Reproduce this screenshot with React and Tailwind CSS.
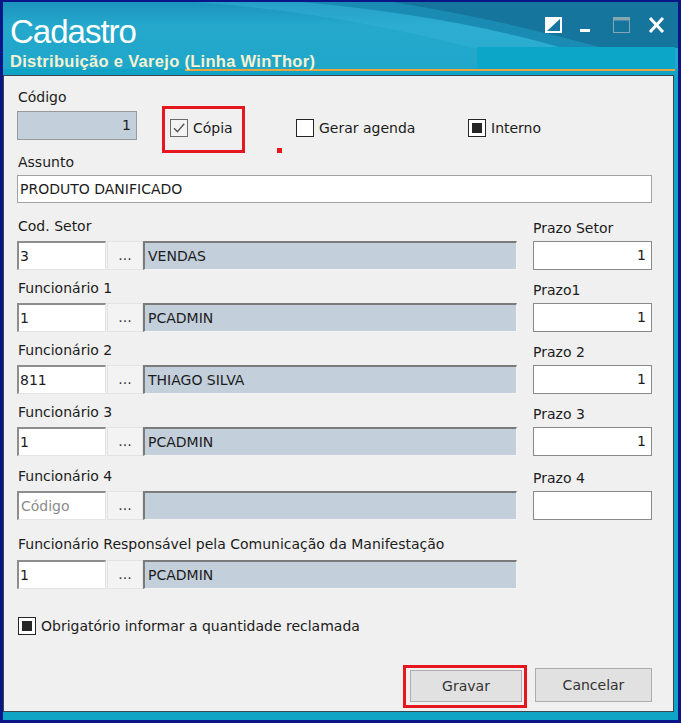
import React from "react";

const rows = [
  { label: "Cod. Setor", code: "3", desc: "VENDAS", prazoLabel: "Prazo Setor", prazo: "1" },
  { label: "Funcionário 1", code: "1", desc: "PCADMIN", prazoLabel: "Prazo1", prazo: "1" },
  { label: "Funcionário 2", code: "811", desc: "THIAGO SILVA", prazoLabel: "Prazo 2", prazo: "1" },
  { label: "Funcionário 3", code: "1", desc: "PCADMIN", prazoLabel: "Prazo 3", prazo: "1" },
  { label: "Funcionário 4", code: "", desc: "", prazoLabel: "Prazo 4", prazo: "" },
];

function Box({ state }) {
  if (state === "check") {
    return (
      <span className="flex w-[18px] h-[18px] items-center justify-center border border-[#6b6b6b] bg-[#f4f4f4]">
        <svg width="14" height="14" viewBox="0 0 14 14">
          <path d="M2 7.2 L5.4 10.6 L12.2 2.8" fill="none" stroke="#5a5a5a" strokeWidth="1.4" />
        </svg>
      </span>
    );
  }
  return (
    <span className="flex w-[18px] h-[18px] items-center justify-center border border-[#262626] bg-white">
      {state === "fill" && <span className="w-[10px] h-[10px] bg-[#262626]" />}
    </span>
  );
}

function Check({ state, children }) {
  return (
    <div className="flex items-center gap-[5px] leading-4">
      <Box state={state} />
      <span>{children}</span>
    </div>
  );
}

function Lookup({ code, desc }) {
  return (
    <div className="flex h-[29px]">
      <div className="w-[89px] flex items-center pl-[1px] bg-white border-t-2 border-l-2 border-r border-b border-t-[#8d8d8d] border-l-[#8d8d8d] border-r-[#e4e4e4] border-b-[#e4e4e4]">
        {code ? <span>{code}</span> : <span className="pl-[1px] text-[#8c8c8c]">Código</span>}
      </div>
      <div className="ml-[1px] w-[36px] flex items-center justify-center bg-[#f3f3f3] border border-[#e3e3e3] text-[#3a3a3a]">
        ...
      </div>
      <div className="flex-1 flex items-center pl-[3px] bg-[#c3cfdb] border-t-2 border-l-2 border-r border-b border-t-[#7b7b7b] border-l-[#7b7b7b] border-r-[#f4f4f4] border-b-[#f4f4f4]">
        {desc}
      </div>
    </div>
  );
}

function TitleArt() {
  return (
    <svg className="absolute inset-0" width="675" height="67" viewBox="0 0 675 67">
      <defs>
        <linearGradient id="tb" x1="0" y1="0" x2="0" y2="1">
          <stop offset="0" stopColor="#1c93bd" />
          <stop offset="0.35" stopColor="#25a8cc" />
          <stop offset="1" stopColor="#1fa7ca" />
        </linearGradient>
      </defs>
      <rect width="675" height="67" fill="url(#tb)" />
      <path d="M190 0 Q330 10 470 46 L560 46 Q450 14 300 0 Z" fill="#3cb7da" opacity="0.35" />
      <path d="M300 0 Q450 14 560 46 L675 46 L675 0 Z" fill="#1a8cb3" />
      <path d="M390 0 Q500 18 600 46 L675 46 L675 0 Z" fill="#15759c" />
      <rect x="474" y="45" width="198" height="22" fill="#0ca6c8" />
    </svg>
  );
}

function WindowButtons() {
  return (
    <div className="flex items-start pt-[15px] pr-[13px]">
      <svg width="17" height="16" viewBox="0 0 17 16">
        <rect x="1" y="1" width="15" height="14" fill="none" stroke="#fff" strokeWidth="2" />
        <polygon points="1,1 16,1 1,15" fill="#fff" />
      </svg>
      <span className="ml-[18px] mt-[12px] w-[10px] h-[3px] bg-white" />
      <svg className="ml-[23px]" width="17" height="16" viewBox="0 0 17 16">
        <rect x="0.5" y="0.5" width="16" height="15" fill="none" stroke="#86a6b2" strokeWidth="1" />
        <rect x="0.5" y="0.5" width="16" height="3" fill="#86a6b2" />
      </svg>
      <svg className="ml-[18px]" width="17" height="16" viewBox="0 0 17 16">
        <path d="M2 1 L15 15 M15 1 L2 15" stroke="#fff" strokeWidth="3" />
      </svg>
    </div>
  );
}

export default function App() {
  return (
    <div className="w-[681px] h-[723px] bg-[#0a1588] pt-[2px] px-[3px] pb-[3px]">
      <div className="h-full flex flex-col bg-[#0fa4c5]">
        {/* title bar */}
        <div className="relative h-[67px] flex justify-between">
          <TitleArt />
          <div className="relative pl-[7px] pt-[12px] font-['Liberation_Sans',Arial,sans-serif]">
            <div className="text-[33px] leading-[36px] tracking-[-1px] text-white">Cadastro</div>
            <div className="mt-[1px] text-[16.5px] leading-[20px] tracking-[0.3px] font-bold text-[#f4f2d2]">
              Distribuição e Varejo (Linha WinThor)
            </div>
          </div>
          <div className="relative">
            <WindowButtons />
          </div>
        </div>
        <div className="h-[2px] ml-[182px] mr-[3px] bg-[#e9a43c]" />
        <div className="h-[4px]" />

        {/* form body */}
        <div className="flex-1 mr-[4px] mb-[8px] bg-[#f0f0f0] border border-[#3d464c] pl-[13px] pr-[21px] pt-[13px] text-[14px] text-[#1c1c1c] font-['DejaVu_Sans',sans-serif]">
          <div className="flex items-start">
            <div>
              <div className="pl-[1px] leading-4">Código</div>
              <div className="mt-[6px] w-[120px] h-[29px] flex items-center justify-end pr-[5px] bg-[#c3cfdb] border border-[#999]">
                1
              </div>
            </div>
            <div className="ml-[25px] mt-[17px] w-[83px] h-[47px] border-[3px] border-[#e5161d] pl-[5px] pt-[10px]">
              <Check state="check">Cópia</Check>
            </div>
            <div className="ml-[32px] mt-[59px] w-[5px] h-[5px] bg-[#e5161d]" />
            <div className="ml-[14px] mt-[30px] w-[172px]">
              <Check state="empty">Gerar agenda</Check>
            </div>
            <div className="mt-[30px]">
              <Check state="fill">Interno</Check>
            </div>
          </div>

          <div className="mt-[1px] pl-[1px] leading-4">Assunto</div>
          <div className="mt-[5px] h-[28px] flex items-center pl-[2px] bg-white border border-[#a2a2a2]">
            PRODUTO DANIFICADO
          </div>

          {rows.map((row, i) => (
            <div key={row.label} className={i === 0 ? "flex gap-4 mt-[15px]" : i === 4 ? "flex gap-4 mt-[12px]" : "flex gap-4 mt-[10px]"}>
              <div className="w-[500px]">
                <div className="pl-[1px] leading-4">{row.label}</div>
                <div className="mt-[7px]">
                  <Lookup code={row.code} desc={row.desc} />
                </div>
              </div>
              <div className="flex-1">
                <div className="mt-[2px] leading-4">{row.prazoLabel}</div>
                <div className="mt-[5px] h-[29px] flex items-center justify-end pr-[5px] bg-white border border-[#8a8a8a]">
                  {row.prazo}
                </div>
              </div>
            </div>
          ))}

          <div className="mt-[16px] w-[500px]">
            <div className="pl-[1px] leading-4">Funcionário Responsável pela Comunicação da Manifestação</div>
            <div className="mt-[8px]">
              <Lookup code="1" desc="PCADMIN" />
            </div>
          </div>

          <div className="mt-[28px] pl-[1px]">
            <Check state="fill">Obrigatório informar a quantidade reclamada</Check>
          </div>

          <div className="mt-[30px] flex justify-end items-start">
            <div className="w-[124px] h-[43px] border-[3px] border-[#e5161d] pl-[4px] pt-[2px]">
              <button className="w-[112px] h-[32px] bg-[#e1e1e1] border border-[#adadad] text-[#333]">Gravar</button>
            </div>
            <button className="ml-[8px] mt-[3px] w-[117px] h-[34px] bg-[#e1e1e1] border border-[#adadad] text-[#333]">
              Cancelar
            </button>
          </div>
        </div>
      </div>
    </div>
  );
}
